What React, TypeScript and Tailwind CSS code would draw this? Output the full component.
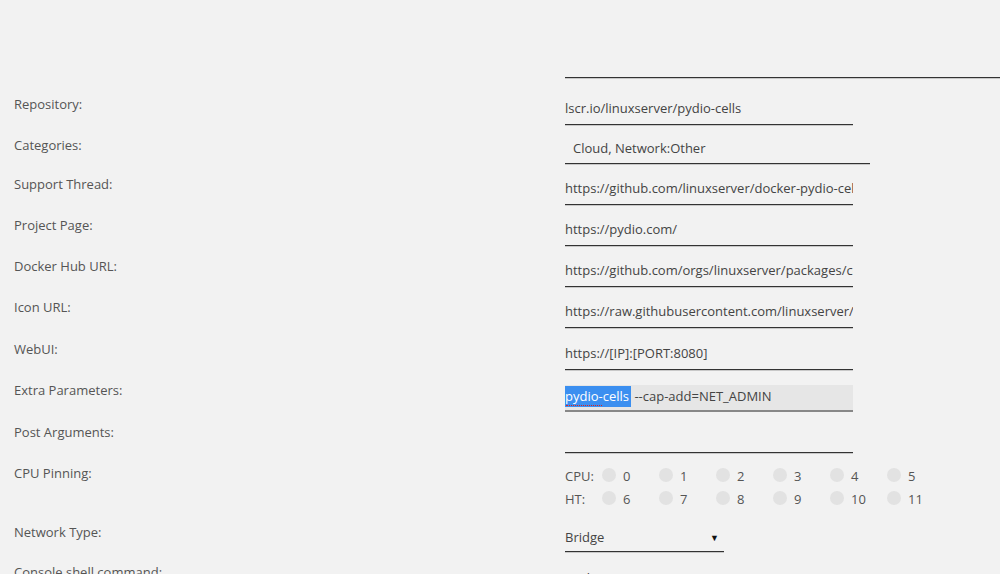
import React from 'react';

type Row = { label: string; value: string; h?: string };

const rows: Row[] = [
  { label: 'Repository:', value: 'lscr.io/linuxserver/pydio-cells' },
];

const urlRows: Row[] = [
  { label: 'Support Thread:', value: 'https://github.com/linuxserver/docker-pydio-cells/issues' },
  { label: 'Project Page:', value: 'https://pydio.com/' },
  { label: 'Docker Hub URL:', value: 'https://github.com/orgs/linuxserver/packages/container/package/pydio-cells' },
  { label: 'Icon URL:', value: 'https://raw.githubusercontent.com/linuxserver/docker-templates/master/linuxserver.io/img/pydio-cells-logo.png', h: 'h-[42px]' },
  { label: 'WebUI:', value: 'https://[IP]:[PORT:8080]' },
];

function Label({ text }: { text: string }) {
  return <div className="w-[565px] shrink-0 pl-[14px] leading-[26px] text-[#555]">{text}</div>;
}

function TextInput({ value }: { value: string }) {
  return (
    <div className="h-[34px] w-[288px] border-b border-[#333] shadow-[0_1px_0_#c8c8c8] overflow-hidden whitespace-nowrap pt-[2px] leading-[31px] text-[#444]">
      {value}
    </div>
  );
}

export default function App() {
  const cpu = [0, 1, 2, 3, 4, 5];
  const ht = [6, 7, 8, 9, 10, 11];
  return (
    <div className="min-h-[574px] h-[574px] overflow-hidden bg-[#f2f2f2] text-[13px]" style={{ fontFamily: '"Open Sans", sans-serif' }}>
      <div className="h-[44px]" />
      <div className="flex h-[47px]">
        <Label text="" />
        <div className="h-[34px] flex-1 border-b border-[#333] shadow-[0_1px_0_#c8c8c8]" />
      </div>

      {rows.map((r) => (
        <div key={r.label} className="flex h-[41px]">
          <Label text={r.label} />
          <TextInput value={r.value} />
        </div>
      ))}

      <div className="flex h-[39px]">
        <Label text="Categories:" />
        <div className="h-[32px] w-[305px] border-b border-[#333] shadow-[0_1px_0_#c8c8c8] pl-[8px] pt-[1px] leading-[31px] text-[#444]">Cloud, Network:Other</div>
      </div>

      {urlRows.map((r) => (
        <div key={r.label} className={`flex ${r.h ?? 'h-[41px]'}`}>
          <Label text={r.label} />
          <TextInput value={r.value} />
        </div>
      ))}

      <div className="flex h-[42px]">
        <Label text="Extra Parameters:" />
        <div className="mt-[8px] h-[27px] w-[288px] border-b-2 border-[#888] bg-[#e6e6e6] whitespace-nowrap leading-[23px] text-[#444]">
          <span className="relative inline-block bg-[#3b8ff0] pr-[2px] text-white leading-[21px]">
            pydio-cells
            <span className="absolute left-[1px] bottom-[1px] h-[2px] w-[36px] border-b border-dotted border-[#e02020]" />
          </span>{' '}
          --cap-add=NET_ADMIN
        </div>
      </div>

      <div className="flex h-[41px]">
        <Label text="Post Arguments:" />
        <TextInput value="" />
      </div>

      <div className="flex h-[59px]">
        <Label text="CPU Pinning:" />
        <div className="pt-[5px] text-[#555]">
          {[
            { name: 'CPU:', vals: cpu },
            { name: 'HT:', vals: ht },
          ].map((line) => (
            <div key={line.name} className="flex h-[23px] items-center">
              <span className="w-[37px]">{line.name}</span>
              {line.vals.map((v) => (
                <span key={v} className="flex w-[57px] items-center">
                  <span className="h-[14px] w-[14px] rounded-full bg-[#e2e2e2] -translate-y-[2px]" />
                  <span className="ml-[7px]">{v}</span>
                </span>
              ))}
            </div>
          ))}
        </div>
      </div>

      <div className="flex h-[40px]">
        <Label text="Network Type:" />
        <div className="flex h-[33px] w-[159px] items-center justify-between border-b border-[#333] shadow-[0_1px_0_#c8c8c8] pt-[5px] pr-[5px] text-[#444]">
          <span>Bridge</span>
          <span className="text-[9px] text-[#111]">▼</span>
        </div>
      </div>

      <div className="flex h-[41px]">
        <Label text="Console shell command:" />
        <div className="pt-[6px] leading-[26px] text-[#444]">Bash</div>
      </div>
    </div>
  );
}
